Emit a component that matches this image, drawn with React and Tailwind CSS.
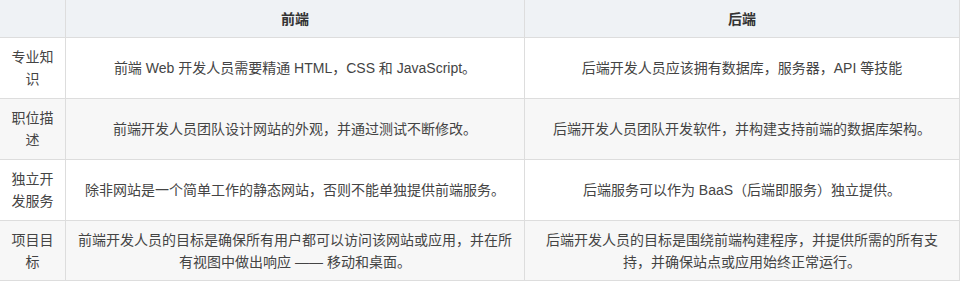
import React from "react";

const ROWS = [
    {
        name: "专业知识",
        front: "前端 Web 开发人员需要精通 HTML，CSS 和 JavaScript。",
        back: "后端开发人员应该拥有数据库，服务器，API 等技能",
        height: "h-[61px]",
        bg: "bg-white",
    },
    {
        name: "职位描述",
        front: "前端开发人员团队设计网站的外观，并通过测试不断修改。",
        back: "后端开发人员团队开发软件，并构建支持前端的数据库架构。",
        height: "h-[61px]",
        bg: "bg-[#f7f7f7]",
    },
    {
        name: "独立开发服务",
        front: "除非网站是一个简单工作的静态网站，否则不能单独提供前端服务。",
        back: "后端服务可以作为 BaaS（后端即服务）独立提供。",
        height: "h-[61px]",
        bg: "bg-white",
    },
    {
        name: "项目目标",
        front: "前端开发人员的目标是确保所有用户都可以访问该网站或应用，并在所有视图中做出响应 —— 移动和桌面。",
        back: "后端开发人员的目标是围绕前端构建程序，并提供所需的所有支持，并确保站点或应用始终正常运行。",
        height: "h-[60px]",
        bg: "bg-[#f7f7f7]",
    },
];

const cell = "flex items-center justify-center text-center border-r border-b border-[#dddddd]";

const App = () => {
    return (
        <div className="w-[960px] h-[283px] bg-white font-['Liberation_Sans','Noto_Sans_CJK_SC',sans-serif] text-[14px] leading-[22px] text-[#444]">
            <div className="grid grid-cols-[66px_459px_435px]">
                <div className={`${cell} h-[38px] bg-[#eff2f5]`} />
                <div className={`${cell} h-[38px] bg-[#eff2f5] font-bold text-[#333]`}>前端</div>
                <div className={`${cell} h-[38px] bg-[#eff2f5] font-bold text-[#333]`}>后端</div>
                {ROWS.map((row) => (
                    <React.Fragment key={row.name}>
                        <div className={`${cell} ${row.height} ${row.bg} px-[10px]`}>{row.name}</div>
                        <div className={`${cell} ${row.height} ${row.bg} px-3`}>{row.front}</div>
                        <div className={`${cell} ${row.height} ${row.bg} px-3`}>{row.back}</div>
                    </React.Fragment>
                ))}
            </div>
        </div>
    );
};

export default App;
